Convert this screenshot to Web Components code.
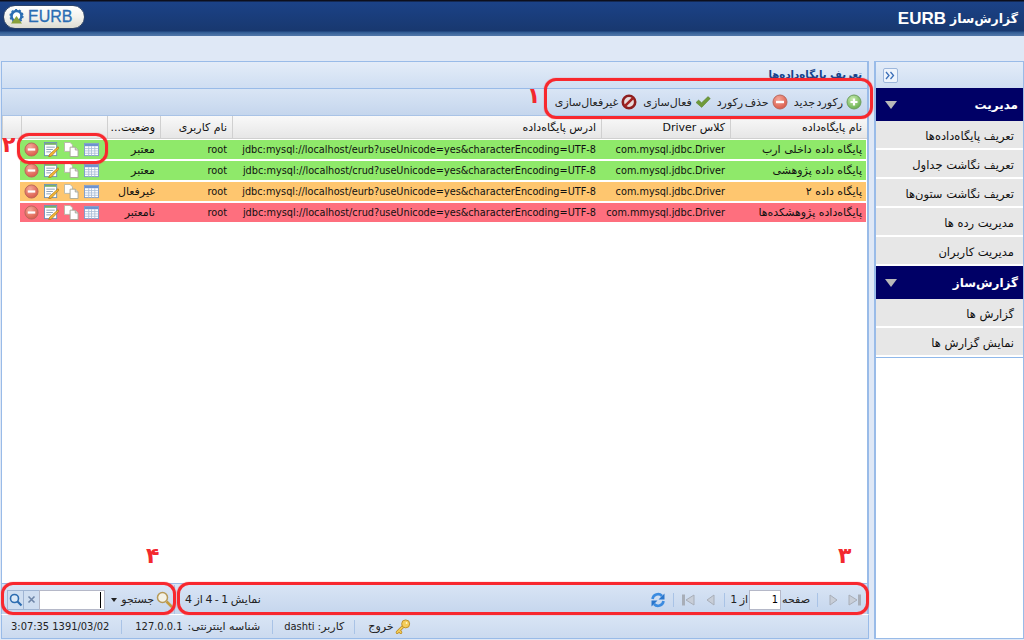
<!DOCTYPE html>
<html lang="fa">
<head>
<meta charset="utf-8">
<title>EURB</title>
<style>
html,body{margin:0;height:100%;overflow:hidden;background:#dfe8f6}
body{font:11px "DejaVu Sans",sans-serif;color:#111}
</style>
</head>
<body>
<eurb-app>
  <eurb-header slot="header"></eurb-header>
  <eurb-panel slot="center" title-text="تعریف پایگاه‌داده‌ها">
    <eurb-toolbar slot="toolbar"></eurb-toolbar>
    <eurb-grid slot="grid"></eurb-grid>
    <eurb-footer slot="footer"></eurb-footer>
  </eurb-panel>
  <eurb-menu slot="east">
    <menu-head>مدیریت</menu-head>
    <menu-item>تعریف پایگاه‌داده‌ها</menu-item>
    <menu-item>تعریف نگاشت جداول</menu-item>
    <menu-item>تعریف نگاشت ستون‌ها</menu-item>
    <menu-item>مدیریت رده ها</menu-item>
    <menu-item>مدیریت کاربران</menu-item>
    <menu-head>گزارش‌ساز</menu-head>
    <menu-item>گزارش ها</menu-item>
    <menu-item>نمایش گزارش ها</menu-item>
  </eurb-menu>
  <eurb-status slot="status"></eurb-status>
</eurb-app>

<script>
const FONT = '"DejaVu Sans Condensed","DejaVu Sans",sans-serif'

//icons used in more than one place
const ICONS = {
  add: `<svg width="16" height="16" viewBox="0 0 16 16"><defs><radialGradient id="a" cx=".4" cy=".3" r=".8"><stop offset="0" stop-color="#c8ecb0"/><stop offset="1" stop-color="#5da842"/></radialGradient></defs><circle cx="8" cy="8" r="7" fill="url(#a)" stroke="#6f9f60"/><path d="M8 4.500v7M4.500 8h7" stroke="#fff" stroke-width="2.200"/></svg>`,
  del: `<svg width="16" height="16" viewBox="0 0 16 16"><defs><radialGradient id="d" cx=".4" cy=".3" r=".8"><stop offset="0" stop-color="#f3a79a"/><stop offset="1" stop-color="#d8513f"/></radialGradient></defs><circle cx="8" cy="8" r="7" fill="url(#d)" stroke="#b9675c"/><path d="M4 8h8" stroke="#fff" stroke-width="2.400"/></svg>`,
  check: `<svg width="16" height="16" viewBox="0 0 16 16"><path d="M1 8.500l2.600-2.400 3 2.600L13 2.600l2.300 2-8.600 8.800z" fill="#6f9a3a" stroke="#557f2d" stroke-width=".5"/></svg>`,
  stop: `<svg width="16" height="16" viewBox="0 0 16 16"><circle cx="8" cy="8" r="6.200" fill="#e9dcdc" stroke="#8e1f1f" stroke-width="2.600"/><path d="M3.800 12.200l8.400-8.400" stroke="#a32222" stroke-width="2.600"/></svg>`,
  table: `<svg width="16" height="16" viewBox="0 0 16 16"><rect x=".5" y="1.500" width="15" height="13" fill="#fff" stroke="#7e9ccb"/><rect x="1" y="2" width="14" height="2.500" fill="#6d93cf"/><path d="M1 7h14M1 9.500h14M1 12h14M5 4.500v10M8 4.500v10M11.500 4.500v10" stroke="#a9bcd8" stroke-width=".9"/></svg>`,
  copy: `<svg width="16" height="16" viewBox="0 0 16 16"><path d="M.5 .5h6l2.500 2.500v7H.5z" fill="#fff" stroke="#b7b7a8"/><path d="M6.500 5.500h5.500l3 3v7H6.500z" fill="#fff" stroke="#a8a898"/><path d="M12 5.500v3h3" fill="#ddd" stroke="#a8a898"/></svg>`,
  edit: `<svg width="16" height="16" viewBox="0 0 16 16"><rect x=".5" y=".5" width="13" height="14" fill="#fff" stroke="#6f93b8"/><rect x="1" y="1" width="12" height="2" fill="#76b06b"/><path d="M2.500 5.500h9M2.500 8h7M2.500 10.500h5" stroke="#8aa0b8"/><path d="M15 5l1 1.500-8 8.500-3 1 1-3z" fill="#f2b632" stroke="#a86f12" stroke-width=".7"/></svg>`
}

class EurbApp extends HTMLElement {
  constructor() {
    super()
    this.attachShadow({ mode: 'open' }).innerHTML = `<style>
      :host{display:grid;width:1024px;height:640px;grid-template-columns:874px 1fr;grid-template-rows:36px 1fr 26px;background:#dfe8f6}
      .h{grid-column:1/3}
      .c{padding:25px 5px 0 1px;min-height:0;display:flex}
      .e{padding:25px 0 1px 0;min-height:0;grid-row:2/4;grid-column:2;display:flex}
      .s{grid-column:1;grid-row:3;padding:0 5px 1px 1px;min-width:0}
    </style>
    <div class="h"><slot name="header"></slot></div>
    <div class="c"><slot name="center"></slot></div>
    <div class="e"><slot name="east"></slot></div>
    <div class="s"><slot name="status"></slot></div>`
  }
}

class EurbHeader extends HTMLElement {
  connectedCallback() {
    this.attachShadow({ mode: 'open' }).innerHTML = `<style>
      :host{display:flex;height:36px;box-sizing:border-box;align-items:center;justify-content:space-between;
        background:linear-gradient(#0d0f1c 0,#0d0f1c 1px,#1b4287 2px,#18386f 31px,#2f5a92 32px,#4c73a6 35px);padding:0 6px 4px 3px}
      .logo{display:flex;align-items:center;gap:3px;width:82px;height:24px;box-sizing:border-box;padding-left:4px;margin-top:1px;
        border-radius:12px;border:1px solid #2c4368;background:linear-gradient(#fff,#f3f3ee 50%,#dddcd2);
        color:#2a6db3;font:16px "Liberation Sans",sans-serif;-webkit-text-stroke:.3px #2a6db3}
      h1{margin:0;display:flex;direction:rtl;align-items:center;gap:4px;color:#fff;padding-top:5px;font-weight:bold}
      h1 span{font:bold 12.5px "DejaVu Sans",sans-serif}
      h1 b{font:bold 17px "Liberation Sans",sans-serif}
    </style>
    <div class="logo"><svg width="17" height="16" viewBox="0 0 17 16"><circle cx="8.500" cy="7" r="5" fill="#fff" stroke="#2a6db3" stroke-width="2.600"/><circle cx="8.500" cy="7" r="6.400" fill="none" stroke="#2a6db3" stroke-width="1.400" stroke-dasharray="2 2"/><path d="M8.500 7l5.500 7.500H3z" fill="#8aa23c"/></svg><span>EURB</span></div>
    <h1><span>گزارش‌ساز</span><b>EURB</b></h1>`
  }
}

class EurbPanel extends HTMLElement {
  connectedCallback() {
    this.attachShadow({ mode: 'open' }).innerHTML = `<style>
      :host{display:flex;flex-direction:column;flex:1;min-width:0;border:1px solid #99bbe8;border-right-width:2px;border-bottom:0;background:#fff;box-sizing:border-box}
      .t{height:26px;box-sizing:border-box;direction:rtl;padding:7px 5px 0;font:bold 10.2px "DejaVu Sans",sans-serif;color:#15428b;background:linear-gradient(#e3ecf8,#cfdef2);overflow:hidden}
      .g{flex:1;min-height:0}
    </style>
    <div class="t">${this.getAttribute('title-text')}</div>
    <slot name="toolbar"></slot>
    <div class="g"><slot name="grid"></slot></div>
    <slot name="footer"></slot>`
  }
}

class EurbToolbar extends HTMLElement {
  connectedCallback() {
    const btns = [['add', 'رکورد جدید'], ['del', 'حذف رکورد'], ['check', 'فعال‌سازی'], ['stop', 'غیرفعال‌سازی']]
    this.attachShadow({ mode: 'open' }).innerHTML = `<style>
      :host{display:flex;direction:rtl;height:28px;box-sizing:border-box;align-items:center;gap:6px;padding:0 5px 0 0;
        background:linear-gradient(#d9e5f5,#c5d6ed);border-top:1px solid #99bbe8;border-bottom:1px solid #a9c3e6;
        font:11px "DejaVu Sans",sans-serif;word-spacing:-2px;color:#222}
      span{display:flex;align-items:center;gap:3px}
      svg{display:block}
    </style>${btns.map(b => `<span>${ICONS[b[0]]}${b[1]}</span>`).join('')}`
  }
}

class EurbGrid extends HTMLElement {
  connectedCallback() {
    //داده‌های جدول
    const rows = [
      ['پایگاه داده داخلی ارب', 'com.mysql.jdbc.Driver', 'jdbc:mysql://localhost/eurb?useUnicode=yes&characterEncoding=UTF-8', 'root', 'معتبر', '#8fe96a'],
      ['پایگاه داده پژوهشی', 'com.mysql.jdbc.Driver', 'jdbc:mysql://localhost/crud?useUnicode=yes&characterEncoding=UTF-8', 'root', 'معتبر', '#8fe96a'],
      ['پایگاه داده ۲', 'com.mysql.jdbc.Driver', 'jdbc:mysql://localhost/eurb?useUnicode=yes&characterEncoding=UTF-8', 'root', 'غیرفعال', '#fec66f'],
      ['پایگاه‌داده پژوهشکده‌ها', 'com.mmysql.jdbc.Driver', 'jdbc:mysql://localhost/crud?useUnicode=yes&characterEncoding=UTF-8', 'root', 'نامعتبر', '#fe6f7e']
    ]
    const heads = ['نام پایگاه‌داده', 'کلاس Driver', 'ادرس پایگاه‌داده', 'نام کاربری', 'وضعیت...', '', '']
    const actions = `<span class="acts">${ICONS.table}${ICONS.copy}${ICONS.edit}${ICONS.del}</span>`
    this.attachShadow({ mode: 'open' }).innerHTML = `<style>
      :host{display:block;height:100%;direction:rtl;background:#fff;font:11px "DejaVu Sans",sans-serif;color:#111}
      .hd{display:grid;grid-template-columns:137px 129px 369px 72px 53px 86px 1fr;height:23px;background:linear-gradient(#f9f9f9,#e6e6e6);border-bottom:1px solid #d0d0d0;box-sizing:border-box}
      .hd div{padding:5px 5px 0 5px;border-left:1px solid #d0d0d0;white-space:nowrap;overflow:hidden}
      .body{padding:1px 1px 0 0}
      .row{display:grid;grid-template-columns:136px 129px 369px 72px 53px 87px;height:19px;margin:0 0 2px;align-items:center;width:846px}
      .row div{padding:0 5px;white-space:nowrap;overflow:hidden}
      .row div:first-child{padding:0 4px}
      .lat{direction:ltr;text-align:right;font-size:10.8px;font-family:${FONT}}
      .row .act{padding:0 8px 0 0;overflow:visible}
      .acts{display:flex;direction:rtl;gap:5px}
      .acts svg{display:block;flex:none;width:15px;height:15px}
    </style>
    <div class="hd">${heads.map(h => `<div>${h}</div>`).join('')}</div>
    <div class="body">${rows.map(r => `<div class="row" style="background:${r[5]}">
      <div>${r[0]}</div><div class="lat">${r[1]}</div><div class="lat">${r[2]}</div><div class="lat">${r[3]}</div><div>${r[4]}</div><div class="act">${actions}</div></div>`).join('')}</div>`
  }
}

class EurbFooter extends HTMLElement {
  connectedCallback() {
    const tri = (pts, bar, m) => `<svg style="margin-right:${m}px" width="16" height="16" viewBox="0 0 16 16"><path d="${pts}" fill="#c8ced8" stroke="#a8aeb8"/>${bar ? `<path d="${bar}" stroke="#a8aeb8" stroke-width="3"/>` : ''}</svg>`
    this.attachShadow({ mode: 'open' }).innerHTML = `<style>
      :host{display:flex;direction:rtl;height:31px;box-sizing:border-box;align-items:center;padding-top:1px;background:linear-gradient(#d9e5f5,#c5d6ed);border-top:1px solid #99bbe8;font:11px "DejaVu Sans",sans-serif;color:#222}
      .pager{flex:1;display:flex;align-items:center;padding:0 5px 0 0}
      .sep{width:1px;height:14px;background:#a9c3e6;margin-right:7px}
      input{width:26px;height:18px;box-sizing:content-box;padding:0 2px;margin:0 1px 0 0;border:1px solid #b5b8c8;background:#fff;font:11px ${FONT};text-align:right;direction:ltr}
      .of{margin-right:1px;word-spacing:-1px}
      .info{margin-right:auto;padding-left:10px;word-spacing:-1px}
      .search{width:173px;flex:none;display:flex;align-items:center;height:100%;gap:2px;border-right:1px solid #a9c3e6;box-sizing:border-box}
      .fld{width:64px;height:18px;box-sizing:content-box;border:1px solid #b5b8c8;background:#fff;position:relative;margin-right:4px}
      .caret{position:absolute;right:3px;top:1px;width:1.300px;height:16px;background:#000}
      .btn{width:15px;height:18px;border:1px solid #9fb4d3;background:#cfdef1;display:flex;align-items:center;justify-content:center;margin-right:-3px}
      .dn{width:0;height:0;border:3px solid transparent;border-top:4px solid #222;margin:4px 2px 0 0}
      svg{display:block;flex:none}
    </style>
    <div class="pager">
      ${tri('M3 3l8 5-8 5z', 'M13.500 2.500v11', 0)}
      ${tri('M5 3l7 5-7 5z', '', 5)}
      <span class="sep" style="margin-right:7px"></span>
      <span style="margin-right:7px">صفحه</span><input value="1"><span class="of">از 1</span>
      <span class="sep" style="margin-right:5px"></span>
      ${tri('M11 3l-7 5 7 5z', '', 5)}
      ${tri('M13 3l-8 5 8 5z', 'M2.500 2.500v11', 6)}
      <span class="sep"></span>
      <svg style="margin-right:7px" width="16" height="16" viewBox="0 0 16 16"><g fill="none" stroke="#3b8be0" stroke-width="2.600"><path d="M2.500 7A5.500 5.500 0 0 1 12 4"/><path d="M13.500 9A5.500 5.500 0 0 1 4 12"/></g><path d="M14.500 1.500v6h-6zM1.500 14.500v-6h6z" fill="#2a76cc"/></svg>
      <span class="info">نمایش 1 - 4 از 4</span>
    </div>
    <div class="search">
      <svg width="18" height="18" viewBox="0 0 18 18"><circle cx="6.500" cy="6.500" r="5" fill="#f4f2e6" stroke="#b79a58" stroke-width="1.500"/><path d="M10.500 10.500l5.500 5.500" stroke="#c49b3e" stroke-width="2.600"/></svg>
      <span>جستجو</span><span class="dn"></span>
      <span class="fld"><span class="caret"></span></span>
      <span class="btn"><svg width="9" height="9" viewBox="0 0 9 9"><path d="M1.500 1.500l6 6M7.500 1.500l-6 6" stroke="#6f86a8" stroke-width="1.600"/></svg></span>
      <span class="btn"><svg width="14" height="14" viewBox="0 0 14 14"><circle cx="5.500" cy="5.500" r="4" fill="#dbe9f8" stroke="#2c6cb0" stroke-width="1.600"/><path d="M8.500 8.500l4 4" stroke="#2c6cb0" stroke-width="2.200"/></svg></span>
    </div>`
  }
}

class EurbStatus extends HTMLElement {
  connectedCallback() {
    this.attachShadow({ mode: 'open' }).innerHTML = `<style>
      :host{display:flex;direction:ltr;height:25px;box-sizing:border-box;align-items:center;
        background:linear-gradient(#d9e5f5,#cbdaef);border:1px solid #99bbe8;border-top-color:#fff;font:11px "DejaVu Sans",sans-serif;color:#222}
      span{display:flex;direction:rtl;align-items:center;height:14px;padding:0 12px 0 13px;border-right:1px solid #a9c3e6;white-space:nowrap;gap:5px}
      span.time{padding-left:9px}
      span.u{gap:3px;padding:0 10px 0 11px}
      span.out{border:0;gap:1px;padding-left:13px}
      b{font:11px ${FONT};direction:ltr;unicode-bidi:isolate}
    </style>
    <span class="time"><b>3:07:35 1391/03/02</b></span>
    <span>شناسه اینترنتی: <b>127.0.0.1</b></span>
    <span class="u">کاربر: <b>dashti</b></span>
    <span class="out"><svg width="16" height="16" viewBox="0 0 18 18"><g fill="none" stroke-linecap="round"><path d="M2.500 15L10 7.500M4.500 13l2 2" stroke="#b98a24" stroke-width="3.400"/><path d="M2.500 15L10 7.500M4.500 13l2 2" stroke="#f4cd5a" stroke-width="1.800"/></g><circle cx="12" cy="5.500" r="4.500" fill="#f4cd5a" stroke="#b98a24"/><circle cx="13" cy="4.500" r="1" fill="#fff5c8"/></svg>خروج</span>`
  }
}

class EurbMenu extends HTMLElement {
  constructor() {
    super()
    this.attachShadow({ mode: 'open' }).innerHTML = `<style>
      :host{display:block;flex:1;background:#fff;border:1px solid #99bbe8;border-left-width:2px;box-sizing:border-box}
      .top{height:26px;background:linear-gradient(#e3ecf8,#cfdef2);display:flex;align-items:center;padding-left:7px;box-sizing:border-box}
      .tg{width:13px;height:13px;border:1px solid #9db7dc;border-radius:2px;background:#eef4fc;display:flex;align-items:center;justify-content:center}
      .end{border-top:1px solid #8fb8ea}
    </style>
    <div class="top"><span class="tg"><svg width="11" height="9" viewBox="0 0 11 9"><path d="M1 1l3 3.500-3 3.500M5.500 1l3 3.500-3 3.500" fill="none" stroke="#3c6fb8" stroke-width="1.300"/></svg></span></div>
    <slot></slot><div class="end"></div>`
  }
}

class MenuHead extends HTMLElement {
  constructor() {
    super()
    this.attachShadow({ mode: 'open' }).innerHTML = `<style>
      :host{display:flex;direction:rtl;justify-content:space-between;align-items:center;height:33px;padding:0 5px 0 9px;box-sizing:border-box;
        background:#000066;color:#fff;font:bold 12px "DejaVu Sans",sans-serif}
      i{width:0;height:0;border:6px solid transparent;border-top:8px solid #b9b9b9;border-bottom:0}
    </style><slot></slot><i></i>`
  }
}

class MenuItem extends HTMLElement {
  constructor() {
    super()
    this.attachShadow({ mode: 'open' }).innerHTML = `<style>
      :host{display:flex;direction:rtl;align-items:center;height:27px;margin-bottom:2px;padding:3px 9px 0;box-sizing:border-box;
        background:#e7e7e7;color:#111;font:11.500px "DejaVu Sans",sans-serif}
    </style><slot></slot>`
  }
}

//علامت‌های قرمز روی تصویر
class RedNote extends HTMLElement {
  connectedCallback() {
    const b = this.dataset
    this.attachShadow({ mode: 'open' }).innerHTML = `<style>
      :host{position:absolute;left:${b.x}px;top:${b.y}px;width:${b.w}px;height:${b.h}px;box-sizing:border-box;border:3px solid #f8282e;border-radius:12px;box-shadow:0 0 1px #f8282e;filter:blur(.5px)}
    </style>`
  }
}
class RedNum extends HTMLElement {
  connectedCallback() {
    this.attachShadow({ mode: 'open' }).innerHTML = `<style>
      :host{position:absolute;left:${this.dataset.x}px;top:${this.dataset.y}px;color:#f3282e;font:bold 22px "DejaVu Sans",sans-serif}
    </style><slot></slot>`
  }
}

customElements.define('eurb-app', EurbApp)
customElements.define('eurb-header', EurbHeader)
customElements.define('eurb-panel', EurbPanel)
customElements.define('eurb-toolbar', EurbToolbar)
customElements.define('eurb-grid', EurbGrid)
customElements.define('eurb-footer', EurbFooter)
customElements.define('eurb-status', EurbStatus)
customElements.define('eurb-menu', EurbMenu)
customElements.define('menu-head', MenuHead)
customElements.define('menu-item', MenuItem)
customElements.define('red-note', RedNote)
customElements.define('red-num', RedNum)

const notes = [[544, 78, 329, 41], [17, 133, 91, 31], [177, 582, 692, 33], [1, 582, 175, 33]]
notes.forEach(n => {
  const el = document.createElement('red-note')
  el.dataset.x = n[0]; el.dataset.y = n[1]; el.dataset.w = n[2]; el.dataset.h = n[3]
  document.body.appendChild(el)
})
const nums = [['۱', 527, 83], ['۲', 2, 132], ['۳', 838, 543], ['۴', 146, 543]]
nums.forEach(n => {
  const el = document.createElement('red-num')
  el.textContent = n[0]; el.dataset.x = n[1]; el.dataset.y = n[2]
  document.body.appendChild(el)
})
</script>
</body>
</html>
